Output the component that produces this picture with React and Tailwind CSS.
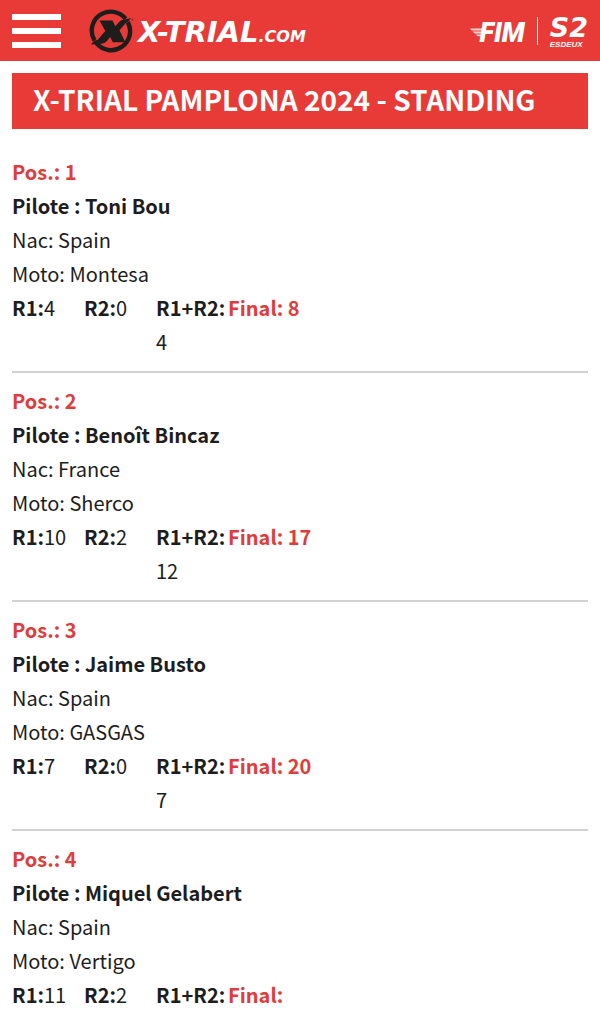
import React from 'react';

const STANDING = [
  { pos: 1, pilote: 'Toni Bou',        nac: 'Spain',  moto: 'Montesa', r1: 4,  r2: 0, total: 4,  final: 8 },
  { pos: 2, pilote: 'Benoît Bincaz',   nac: 'France', moto: 'Sherco',  r1: 10, r2: 2, total: 12, final: 17 },
  { pos: 3, pilote: 'Jaime Busto',     nac: 'Spain',  moto: 'GASGAS',  r1: 7,  r2: 0, total: 7,  final: 20 },
  { pos: 4, pilote: 'Miquel Gelabert', nac: 'Spain',  moto: 'Vertigo', r1: 11, r2: 2 },
];

export default function App() {
  return (
    <div className="min-h-screen bg-white font-['Noto_Sans_CJK_SC',sans-serif] text-[#1d1d1d]">
      <Header />
      <main className="p-3">
        <h1 className="bg-[#e83b37] px-[21px] pt-[6px] pb-[10px] text-[28px] leading-10 font-bold text-white">
          X-TRIAL PAMPLONA 2024 - STANDING
        </h1>
        <ul className="mt-[15px]">
          {STANDING.map(rider => <Rider key={rider.pos} {...rider} />)}
        </ul>
      </main>
    </div>
  );
}

function Header() {
  return (
    <header className="flex h-[61px] items-center justify-between bg-[#e83b37] px-3 text-white">
      <div className="flex items-center gap-7">
        <button type="button" aria-label="Menu" className="flex w-[49px] flex-col gap-2">
          <span className="h-[6px] bg-white" />
          <span className="h-[6px] bg-white" />
          <span className="h-[6px] bg-white" />
        </button>
        <a href="#" className="flex items-center gap-1">
          <XLogo />
          <span className="pt-1 font-['DejaVu_Sans',sans-serif] text-[29px] leading-8 font-bold italic">
            X-TRIAL<span className="text-base">.COM</span>
          </span>
        </a>
      </div>
      <div className="flex items-center gap-3">
        <a href="#" className="flex items-center">
          <svg className="h-5 w-[9px] shrink-0 overflow-visible" viewBox="0 0 9 20" fill="#fbd5d3" aria-hidden="true">
            <path d="M-1 7.500h16l-.6 2H.8zM1.500 10.500h13l-.6 2H3.600zM4.500 13.500h9l-.6 1.800H6.700z" />
          </svg>
          <span className="pt-1 font-['Roboto',sans-serif] text-[27px] leading-8 font-black italic">FIM</span>
        </a>
        <span className="h-7 w-px bg-white" />
        <a href="#" className="flex flex-col pt-1 font-bold italic">
          <span className="font-['DejaVu_Sans',sans-serif] text-[27px] leading-6">S2</span>
          <span className="font-['Liberation_Sans',sans-serif] text-[8px] leading-[10px]">ESDEUX</span>
        </a>
      </div>
    </header>
  );
}

function XLogo() {
  return (
    <svg className="h-11 w-[45px]" viewBox="0 0 45 44" aria-hidden="true">
      {/* broken ring */}
      <path d="M36.600 9.800A19 19 0 0 0 5.500 31.500" fill="none" stroke="#1d1d1b" strokeWidth="4.400" />
      <path d="M7.400 34.200A19 19 0 0 0 38.800 13.100" fill="none" stroke="#1d1d1b" strokeWidth="4.400" />
      <path
        d="M10.500 11.500H23.500L26.300 17.200 30.300 12.700Q32 11 35 10.600L42 9.300 38.800 13 37 13.800 30.500 21.200 36.300 33.300H23.800L21.200 28 17.500 32.500Q15.600 34.500 12.500 34.700L2 35.500 5.500 31.500 8.500 31 16.300 22z"
        fill="#1d1d1b"
      />
      <circle cx="43.500" cy="10.500" r="1" fill="#8c2523" />
    </svg>
  );
}

function Rider({ pos, pilote, nac, moto, r1, r2, total, final }) {
  return (
    <li className="border-b-2 border-[#d2d2d2] pt-[11px] pb-3 text-xl leading-[34px] last:border-b-0">
      <h2 className="font-bold text-[#e03c3a]">Pos.: {pos}</h2>
      <p className="font-bold">Pilote : {pilote}</p>
      <p>Nac: {nac}</p>
      <p>Moto: {moto}</p>
      <div className="grid grid-cols-8">
        <p><b>R1:</b>{r1}</p>
        <p><b>R2:</b>{r2}</p>
        <p><b>R1+R2:</b> {total}</p>
        <p className="col-span-5 font-bold text-[#e03c3a]">Final: {final}</p>
      </div>
    </li>
  );
}
